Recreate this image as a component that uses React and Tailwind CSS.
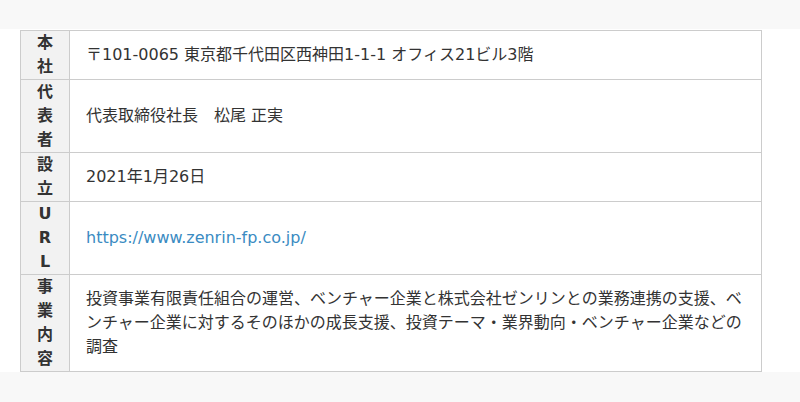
import React from 'react';

const rows = [
  { label: '本社', value: '〒101-0065 東京都千代田区西神田1-1-1 オフィス21ビル3階' },
  { label: '代表者', value: '代表取締役社長　松尾 正実' },
  { label: '設立', value: '2021年1月26日' },
  { label: 'URL', value: 'https://www.zenrin-fp.co.jp/', link: true },
  {
    label: '事業内容',
    value:
      '投資事業有限責任組合の運営、ベンチャー企業と株式会社ゼンリンとの業務連携の支援、ベンチャー企業に対するそのほかの成長支援、投資テーマ・業界動向・ベンチャー企業などの調査',
  },
];

export default function App() {
  return (
    <div className="w-[800px] h-[402px] bg-white text-[#333] font-['DejaVu_Sans','Noto_Sans_CJK_JP',sans-serif] text-[16px]">
      <div className="h-[29px] bg-[#f8f8f8]" />
      <div className="pt-px pl-5">
        <div className="w-[742px] border border-[#cccccc]">
          {rows.map((row, i) => (
            <div key={row.label} className={`flex ${i > 0 ? 'border-t border-[#cccccc]' : ''}`}>
              <div className="w-[49px] shrink-0 px-4 bg-[#f2f2f2] border-r border-[#cccccc] text-center font-bold leading-6 break-all">
                {row.label}
              </div>
              <div className="flex-1 flex items-center px-4 py-3 leading-6">
                {row.link ? (
                  <a href="#" className="text-[#3a8bc2]">{row.value}</a>
                ) : (
                  <span>{row.value}</span>
                )}
              </div>
            </div>
          ))}
        </div>
      </div>
      <div className="h-[30px] bg-[#f8f8f8]" />
    </div>
  );
}
